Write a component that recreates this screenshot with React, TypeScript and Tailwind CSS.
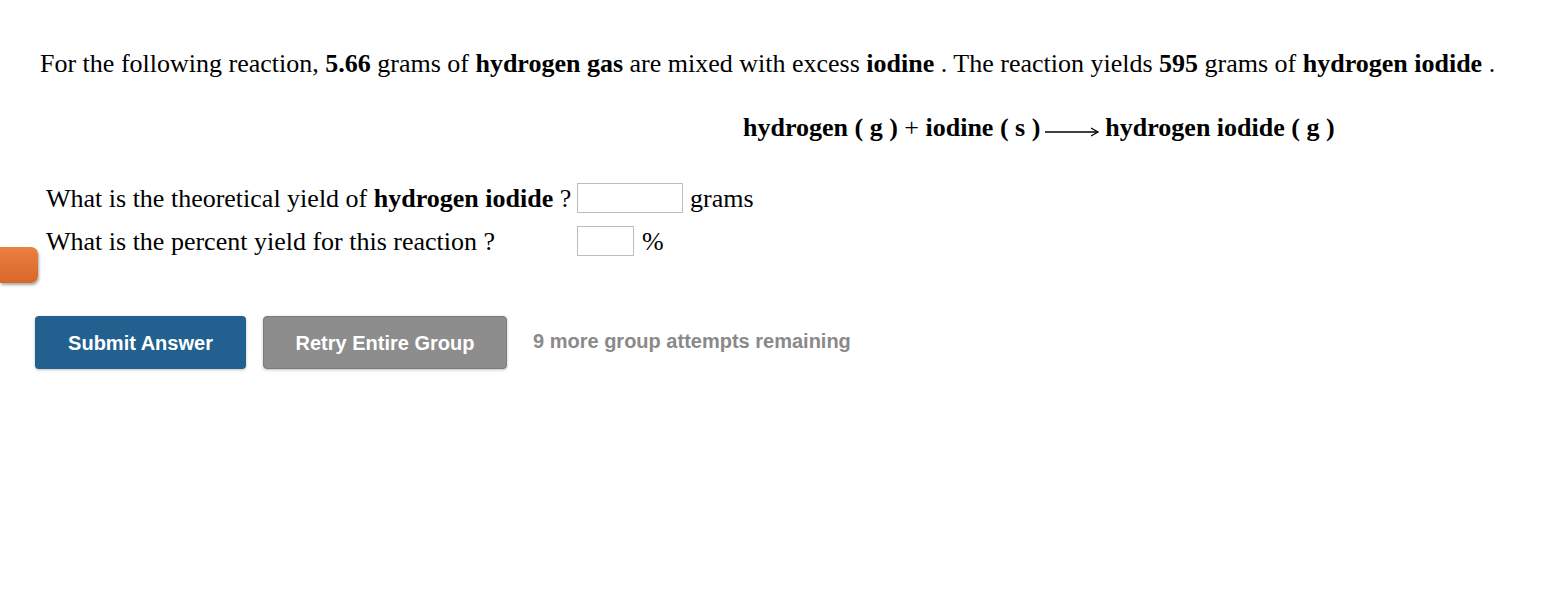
export default function App() {
  return (
    <div className="relative w-[1564px] h-[612px] bg-white text-black" style={{ fontFamily: '"Liberation Serif", "Times New Roman", serif' }}>
      <div className="absolute left-0 top-[247px] w-[38px] h-[36px] rounded-r-[7px] bg-gradient-to-b from-[#e9813f] to-[#d9672a] shadow-[1px_2px_3px_rgba(0,0,0,0.35)]" />
      <div className="pt-[46px] pl-[40px]">
        <p className="text-[26px] leading-[36px] whitespace-nowrap">
          For the following reaction, <b>5.66</b> grams of <b>hydrogen gas</b> are mixed with excess <b>iodine</b> . The reaction yields <b>595</b> grams of <b>hydrogen iodide</b> .
        </p>
        <div className="mt-[28px] pl-[703px] text-[26px] leading-[36px] whitespace-nowrap flex items-center">
          <b>hydrogen</b>&nbsp;<b>( g )</b>&nbsp;+&nbsp;<b>iodine</b>&nbsp;<b>( s )</b>
          <svg width="56" height="14" viewBox="0 0 56 14" className="ml-[4px] mr-[5px] mt-[8px]">
            <line x1="1" y1="7" x2="53" y2="7" stroke="#000" strokeWidth="1.5" />
            <path d="M47 3 L54 7 L47 11" fill="none" stroke="#000" strokeWidth="1.3" />
          </svg>
          <b>hydrogen iodide</b>&nbsp;<b>( g )</b>
        </div>
        <div className="mt-[34px] pl-[6px] flex flex-col gap-[7px] text-[26px]">
          <div className="flex items-center h-[36px]">
            <span className="w-[531px] whitespace-nowrap">What is the theoretical yield of <b>hydrogen iodide</b> ?</span>
            <input className="w-[106px] h-[30px] border border-[#bdbdbd] outline-none" />
            <span className="ml-[7px]">grams</span>
          </div>
          <div className="flex items-center h-[36px]">
            <span className="w-[531px] whitespace-nowrap">What is the percent yield for this reaction ?</span>
            <input className="w-[57px] h-[30px] border border-[#bdbdbd] outline-none" />
            <span className="ml-[8px]">%</span>
          </div>
        </div>
        <div className="mt-[57px] -ml-[5px] flex items-center gap-[17px]" style={{ fontFamily: '"Liberation Sans", Arial, sans-serif' }}>
          <button className="w-[211px] h-[53px] rounded-[4px] bg-[#22618f] text-white font-bold text-[20px] shadow-[0_1px_3px_rgba(0,0,0,0.25)]">Submit Answer</button>
          <button className="w-[244px] h-[53px] rounded-[4px] bg-[#8d8d8d] border border-[#7a7a7a] text-white font-bold text-[20px] shadow-[0_1px_3px_rgba(0,0,0,0.25)]">Retry Entire Group</button>
          <span className="ml-[9px] -mt-[4px] text-[#8a8a8a] font-bold text-[20px]">9 more group attempts remaining</span>
        </div>
      </div>
    </div>
  );
}
